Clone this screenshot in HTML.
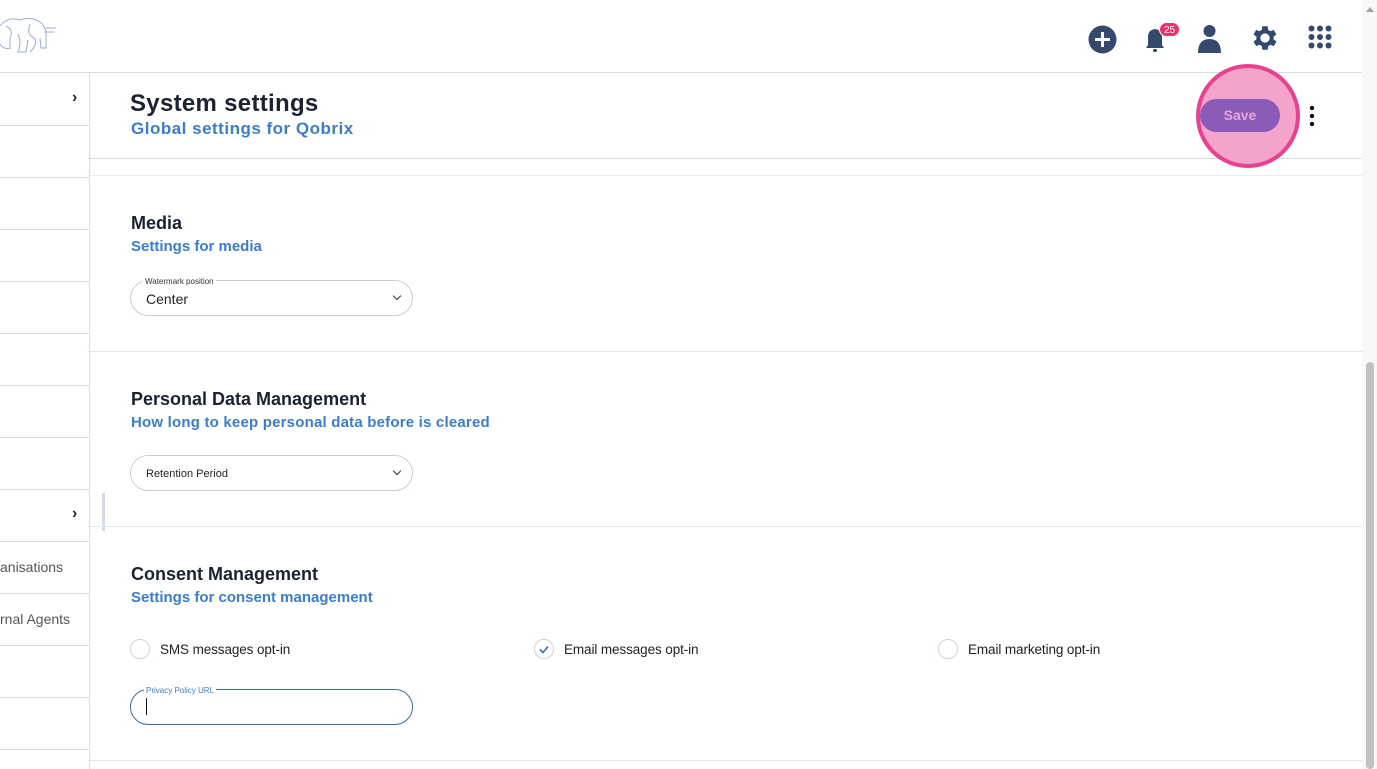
<!DOCTYPE html>
<html><head><style>
*{box-sizing:border-box;margin:0;padding:0}
body{width:1377px;height:769px;overflow:hidden;background:#fff;font-family:"Liberation Sans",Arial,sans-serif;position:relative;color:#1b2230}
.abs{position:absolute}
.hline{position:absolute;height:1px;background:#d5dbe3}
.row{position:absolute;left:0;width:89px;height:1px;background:#d5dbe3}
.side{position:absolute;font-size:14px;color:#555}
h2{position:absolute;font-size:18px;font-weight:bold;color:#1b2230}
.sub{position:absolute;font-size:15px;font-weight:bold;color:#3b7dc8}
.sel{position:absolute;width:283px;height:36px;border:1px solid #c9ced6;border-radius:18px}
.sel .v{position:absolute;left:15px;top:10px;font-size:14px;color:#222}
.chev{position:absolute;right:12px;top:12px;width:6px;height:6px;border-right:1.5px solid #333;border-bottom:1.5px solid #333;transform:rotate(45deg)}
.lbl{position:absolute;font-size:8px;color:#333;background:#fff;padding:0 2px}
.radio{position:absolute;width:20px;height:20px;border:1.5px solid #cdd3dc;border-radius:50%}
.rl{position:absolute;font-size:13.5px;color:#222;letter-spacing:-0.1px}
</style></head><body>
<svg class="abs" style="left:0;top:14px" width="58" height="42" viewBox="0 0 58 42" fill="none" stroke="#9aaccc" stroke-width="1"><path d="M0 12 Q8 2 20 6 Q30 2 40 8 Q46 12 46 20 L46 34 L41 34 L40 24 M46 14 L56 14 M44 18 L54 18 M0 30 Q4 36 10 34 L10 24 M18 20 Q22 28 18 38 L26 38 L28 26 M30 10 Q26 20 34 24 Q38 28 32 36 L30 38 M6 12 Q14 16 10 24"/></svg>
<svg class="abs" style="left:1088px;top:25px" width="29" height="29"><circle cx="14.5" cy="14.5" r="14" fill="#34496b"/><path d="M14.5 7v15M7 14.5h15" stroke="#fff" stroke-width="3"/></svg>
<svg class="abs" style="left:1143px;top:24px" width="28" height="30" viewBox="0 0 28 30"><path d="M3 24 L5 21 L5 13 Q5 6 12 5 Q19 6 19 13 L19 21 L21 24 Z" fill="#34496b"/><rect x="10" y="25" width="4" height="3" rx="1.5" fill="#34496b"/></svg>
<div class="abs" style="left:1159px;top:22px;width:21px;height:15px;border-radius:8px;background:#e8316b;color:#fff;font-size:10px;text-align:center;line-height:15px;border:1px solid #fff">25</div>
<svg class="abs" style="left:1197px;top:24px" width="25" height="29"><circle cx="12.5" cy="7" r="6" fill="#34496b"/><path d="M1 29 Q1 15 12.5 15 Q24 15 24 29Z" fill="#34496b"/></svg>
<svg class="abs" style="left:1249px;top:22px" width="32" height="32" viewBox="0 0 24 24"><path fill="#34496b" d="M19.4 13a7.5 7.5 0 000-2l2.1-1.6-2-3.5-2.5 1a7.6 7.6 0 00-1.7-1L15 3.2h-4l-.4 2.7a7.6 7.6 0 00-1.7 1l-2.5-1-2 3.5L6.6 11a7.5 7.5 0 000 2l-2.2 1.6 2 3.5 2.5-1a7.6 7.6 0 001.7 1l.4 2.7h4l.4-2.7a7.6 7.6 0 001.7-1l2.5 1 2-3.5zM13 15.5a3.5 3.5 0 110-7 3.5 3.5 0 010 7z" transform="translate(-1 0)"/></svg>
<svg class="abs" style="left:1308px;top:25px" width="24" height="24"><g fill="#34496b"><circle cx="3.5" cy="3.5" r="3"/><circle cx="12" cy="3.5" r="3"/><circle cx="20.5" cy="3.5" r="3"/><circle cx="3.5" cy="12" r="3"/><circle cx="12" cy="12" r="3"/><circle cx="20.5" cy="12" r="3"/><circle cx="3.5" cy="20.5" r="3"/><circle cx="12" cy="20.5" r="3"/><circle cx="20.5" cy="20.5" r="3"/></g></svg>
<div class="abs" style="left:1362px;top:0;width:15px;height:769px;background:#f7f7f7"></div>
<div class="abs" style="left:1366px;top:362px;width:8px;height:407px;background:#c1c1c1;border-radius:4px"></div>
<div class="abs" style="left:1366px;top:7px;width:0;height:0;border-left:4px solid transparent;border-right:4px solid transparent;border-bottom:5px solid #a3a3a3"></div>
<div class="hline" style="left:0;top:72px;width:1362px"></div>
<div class="abs" style="left:89px;top:72px;width:1px;height:697px;background:#d5dbe3"></div>
<div class="row" style="top:125px"></div><div class="row" style="top:177px"></div><div class="row" style="top:229px"></div><div class="row" style="top:281px"></div><div class="row" style="top:333px"></div><div class="row" style="top:385px"></div><div class="row" style="top:437px"></div><div class="row" style="top:489px"></div><div class="row" style="top:541px"></div><div class="row" style="top:593px"></div><div class="row" style="top:645px"></div><div class="row" style="top:697px"></div><div class="row" style="top:749px"></div>
<div class="side" style="left:72px;top:89px;font-weight:bold;color:#222;font-size:16px">›</div>
<div class="side" style="left:72px;top:505px;font-weight:bold;color:#222;font-size:16px">›</div>
<div class="side" style="left:0;top:559px">anisations</div>
<div class="side" style="left:0;top:611px">rnal Agents</div>
<div class="abs" style="left:102px;top:493px;width:3px;height:38px;background:#d5dbe3"></div>
<div class="abs" style="left:130px;top:90px;font-size:24px;font-weight:bold;color:#1b2230;letter-spacing:0.3px">System settings</div>
<div class="sub" style="left:131px;top:119px;font-size:17px;letter-spacing:0.5px">Global settings for Qobrix</div>
<div class="hline" style="left:90px;top:158px;width:1272px"></div>
<div class="hline" style="left:90px;top:175px;width:1272px;background:#e8ecf0"></div>
<div class="abs" style="left:1196px;top:64px;width:104px;height:104px;border-radius:50%;background:#f4a3cc;border:4px solid #e8418f"></div>
<div class="abs" style="left:1200px;top:99px;width:80px;height:33px;border-radius:17px;background:#8a5bb8;color:#e9a6d6;font-weight:bold;font-size:14px;text-align:center;line-height:33px">Save</div>
<svg class="abs" style="left:1308px;top:105px" width="8" height="22"><circle cx="4" cy="3" r="2.2" fill="#111"/><circle cx="4" cy="11" r="2.2" fill="#111"/><circle cx="4" cy="19" r="2.2" fill="#111"/></svg>
<h2 style="left:131px;top:213px">Media</h2>
<div class="sub" style="left:131px;top:238px">Settings for media</div>
<div class="sel" style="left:130px;top:280px"><div class="v" style="top:10px">Center</div><div class="chev"></div></div>
<div class="lbl" style="left:143px;top:277px">Watermark position</div>
<div class="hline" style="left:90px;top:351px;width:1272px;background:#e4e8ed"></div>
<h2 style="left:131px;top:389px">Personal Data Management</h2>
<div class="sub" style="left:131px;top:414px;letter-spacing:0.2px">How long to keep personal data before is cleared</div>
<div class="sel" style="left:130px;top:455px"><div class="v" style="top:12px;font-size:11px">Retention Period</div><div class="chev"></div></div>
<div class="hline" style="left:90px;top:526px;width:1272px;background:#e4e8ed"></div>
<h2 style="left:131px;top:564px">Consent Management</h2>
<div class="sub" style="left:131px;top:589px">Settings for consent management</div>
<div class="radio" style="left:130px;top:639px"></div><div class="rl" style="left:160px;top:642px">SMS messages opt-in</div>
<div class="radio" style="left:534px;top:639px"></div>
<svg class="abs" style="left:534px;top:639px" width="20" height="20"><path d="M6 10.5l3 3 5-6" stroke="#3c6eb4" stroke-width="1.6" fill="none"/></svg>
<div class="rl" style="left:564px;top:642px">Email messages opt-in</div>
<div class="radio" style="left:938px;top:639px"></div><div class="rl" style="left:968px;top:642px">Email marketing opt-in</div>
<div class="sel" style="left:130px;top:689px;border-color:#3f6d9c"></div>
<div class="lbl" style="left:144px;top:686px;color:#3b7dc8">Privacy Policy URL</div>
<div class="abs" style="left:146px;top:698px;width:1px;height:17px;background:#111"></div>
<div class="hline" style="left:90px;top:760px;width:1272px;background:#e4e8ed"></div>
</body></html>
